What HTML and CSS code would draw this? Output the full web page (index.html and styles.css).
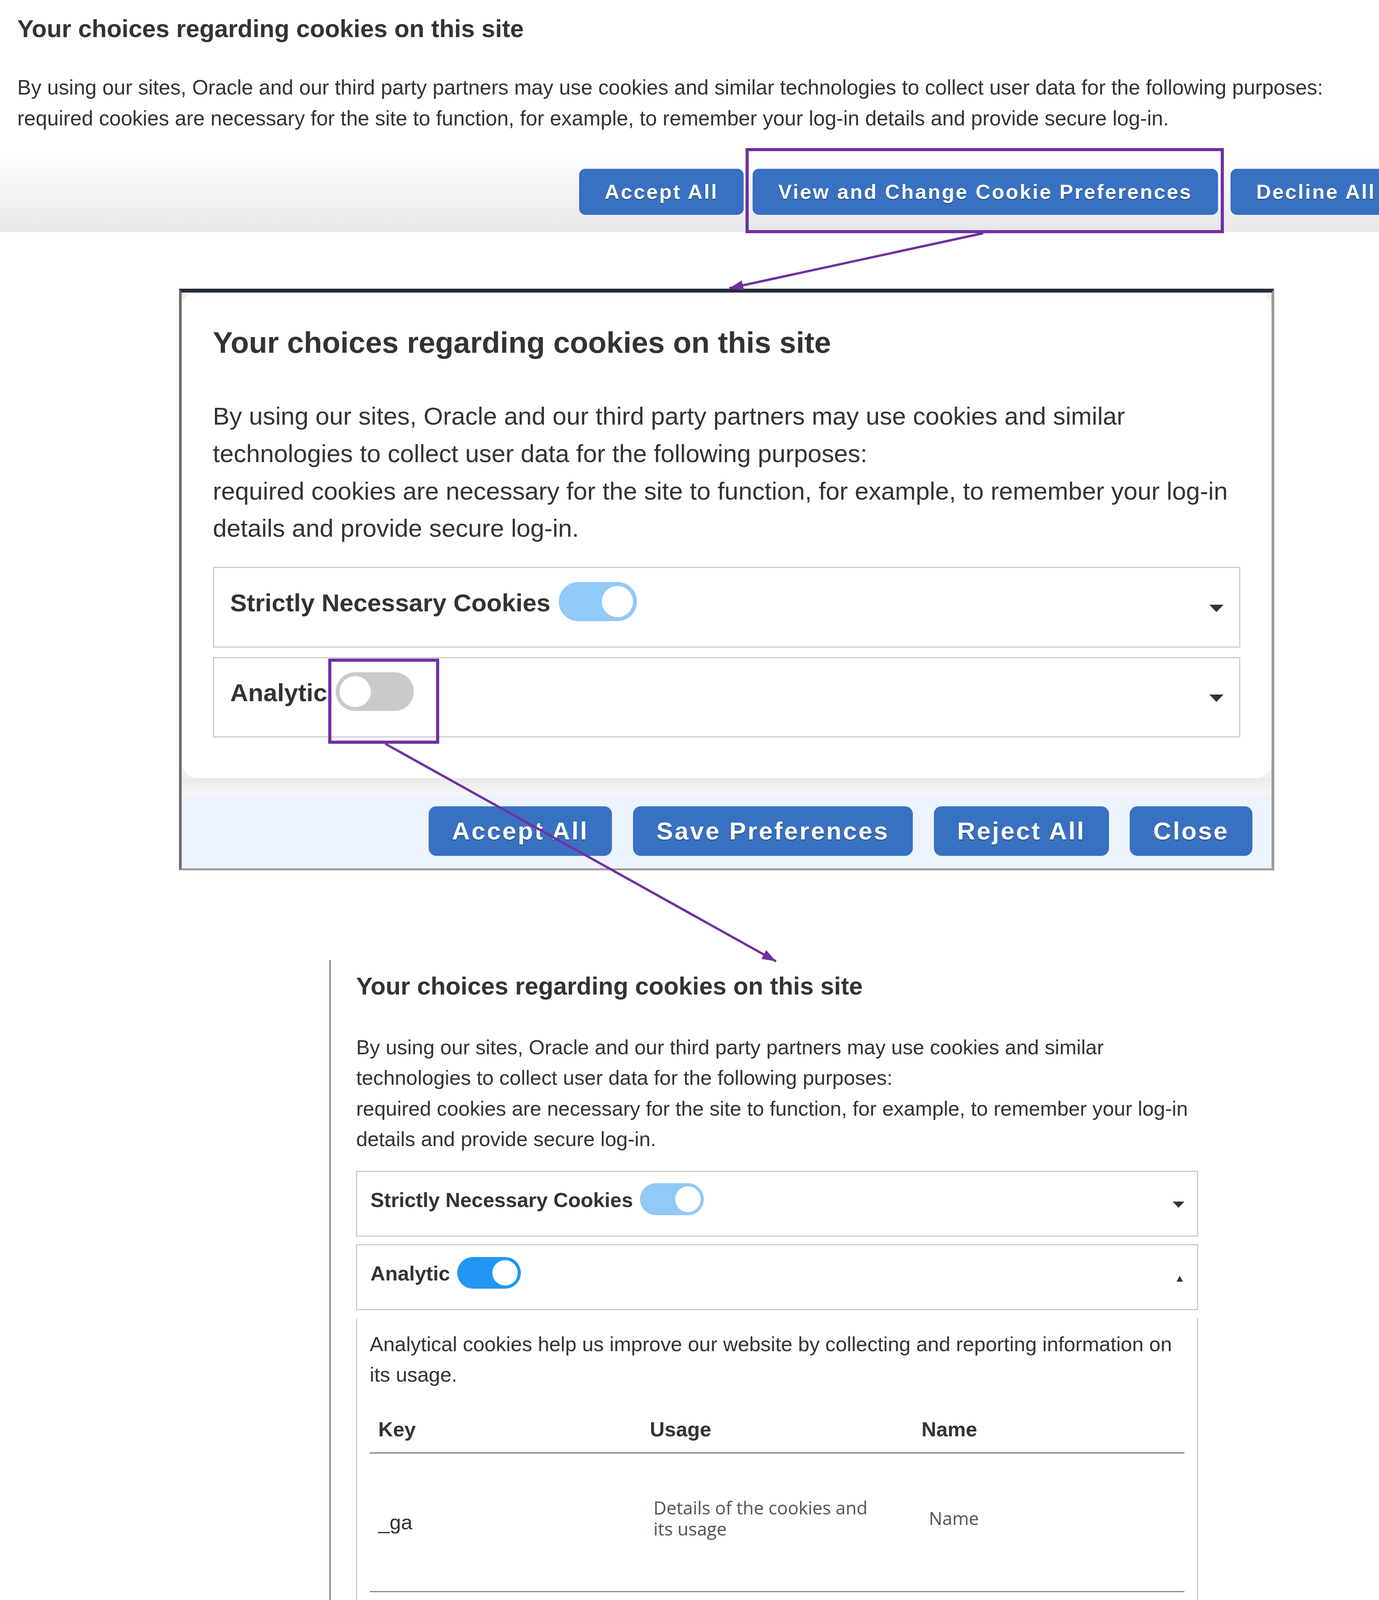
FILE: index.html
```html
<!DOCTYPE html>
<html lang="en">
<head>
<meta charset="utf-8">
<title>Cookie preferences</title>
<link rel="stylesheet" href="styles.css">
</head>
<body>
<div class="page">
  <section class="banner">
    <h2 class="title">Your choices regarding cookies on this site</h2>
    <p class="text banner-text">By using our sites, Oracle and our third party partners may use cookies and similar technologies to collect user data for the following purposes:<br>required cookies are necessary for the site to function, for example, to remember your log-in details and provide secure log-in.</p>
    <div class="banner-actions">
      <button class="btn btn-lg">Accept All</button>
      <button class="btn btn-lg">View and Change Cookie Preferences</button>
      <button class="btn btn-lg btn-decline">Decline All</button>
    </div>
  </section>

  <section class="modal modal-lg">
    <div class="card">
      <h2 class="title card-title">Your choices regarding cookies on this site</h2>
      <p class="text card-text">By using our sites, Oracle and our third party partners may use cookies and similar technologies to collect user data for the following purposes:<br>required cookies are necessary for the site to function, for example, to remember your log-in details and provide secure log-in.</p>
      <div class="acc">
        <span class="acc-label">Strictly Necessary Cookies</span>
        <span class="toggle toggle-locked"><span class="knob"></span></span>
        <span class="caret"></span>
      </div>
      <div class="acc">
        <span class="acc-label">Analytic</span>
        <span class="toggle"><span class="knob"></span></span>
        <span class="caret"></span>
      </div>
    </div>
    <div class="shade"></div>
    <div class="footer">
      <button class="btn btn-sm">Accept All</button>
      <button class="btn btn-sm">Save Preferences</button>
      <button class="btn btn-sm">Reject All</button>
      <button class="btn btn-sm">Close</button>
    </div>
  </section>

  <section class="modal modal-sm">
    <div class="card card-cut">
      <h2 class="title card-title">Your choices regarding cookies on this site</h2>
      <p class="text card-text">By using our sites, Oracle and our third party partners may use cookies and similar technologies to collect user data for the following purposes:<br>required cookies are necessary for the site to function, for example, to remember your log-in details and provide secure log-in.</p>
      <div class="acc">
        <span class="acc-label">Strictly Necessary Cookies</span>
        <span class="toggle toggle-locked"><span class="knob"></span></span>
        <span class="caret"></span>
      </div>
      <div class="acc">
        <span class="acc-label">Analytic</span>
        <span class="toggle toggle-on"><span class="knob"></span></span>
        <span class="caret caret-up"></span>
      </div>
      <div class="panel">
        <p class="text">Analytical cookies help us improve our website by collecting and reporting information on its usage.</p>
        <div class="ctable">
          <div class="th">Key</div>
          <div class="th">Usage</div>
          <div class="th">Name</div>
          <div class="td r1">_ga</div>
          <div class="td r1 td-os pad-usage">Details of the cookies and<br>its usage</div>
          <div class="td r1 td-os pad-name">Name</div>
          <div class="td r2">_ga_*</div>
          <div class="td r2 td-os pad-usage">Details of the cookies and its<br>usage</div>
          <div class="td r2 td-os pad-name">Name</div>
        </div>
      </div>
    </div>
    <div class="shade"></div>
    <div class="footer">
      <button class="btn btn-sm">Accept All</button>
      <button class="btn btn-sm">Save Preferences</button>
      <button class="btn btn-sm">Reject All</button>
      <button class="btn btn-sm">Close</button>
    </div>
  </section>
</div>

<svg class="annot" width="3529" height="4936" viewBox="0 0 3529 4936" xmlns="http://www.w3.org/2000/svg">
  <defs>
    <marker id="ah" markerWidth="36" markerHeight="26" refX="36" refY="13" orient="auto" markerUnits="userSpaceOnUse">
      <path d="M0,0 L36,13 L0,26 Z" fill="#7030a0"/>
    </marker>
  </defs>
  <rect x="1912" y="383" width="1216" height="210" fill="none" stroke="#7030a0" stroke-width="8"/>
  <line x1="2516" y1="597" x2="1866" y2="738" stroke="#7030a0" stroke-width="6" marker-end="url(#ah)"/>
  <rect x="844" y="1690" width="276" height="210" fill="none" stroke="#7030a0" stroke-width="8"/>
  <line x1="986" y1="1904" x2="1986" y2="2461" stroke="#7030a0" stroke-width="6" marker-end="url(#ah)"/>
</svg>
</body>
</html>
```

FILE: styles.css
```css
* {
  box-sizing: border-box;
}

html,
body {
  margin: 0;
  padding: 0;
}

body {
  position: relative;
  width: 3529px;
  background: #ffffff;
  color: #333333;
  font-family: "Liberation Sans", Arial, Helvetica, sans-serif;
}

.page {
  display: flex;
  flex-direction: column;
  align-items: flex-start;
  width: 3529px;
  overflow: hidden;
}

/* ---------- top banner ---------- */
.banner {
  --u: 3.27px;
  width: 100%;
  padding: calc(var(--u) * 11.6) calc(var(--u) * 13.5) calc(var(--u) * 13.5);
  background: linear-gradient(to bottom, #ffffff 0%, #ffffff 66%, #e7e7e7 100%);
}

.title {
  margin: 0 0 calc(var(--u) * 23);
  font-size: calc(var(--u) * 19.2);
  line-height: calc(var(--u) * 22);
  font-weight: 700;
  color: #333333;
}

.text {
  margin: 0;
  font-size: calc(var(--u) * 16);
  line-height: calc(var(--u) * 24);
  color: #333333;
}

.banner-text {
  font-size: calc(var(--u) * 16.2);
}

.banner-actions {
  display: flex;
  justify-content: flex-end;
  gap: calc(var(--u) * 7);
  margin: calc(var(--u) * 27.5) -101px 0 0;
}

.btn {
  display: flex;
  align-items: center;
  border: 0;
  margin: 0;
  background: #3871c2;
  color: #ffffff;
  font-family: "Liberation Sans", Arial, Helvetica, sans-serif;
  font-weight: 700;
  font-size: calc(var(--u) * 16);
  letter-spacing: calc(var(--u) * 1);
  white-space: nowrap;
  border-radius: calc(var(--u) * 5);
  text-shadow: 0 calc(var(--u) * 0.6) calc(var(--u) * 0.5) #1c3c70;
  box-shadow: inset 0 calc(var(--u) * 0.4) 0 #4a82cf;
}

.btn-lg {
  height: calc(var(--u) * 36);
  padding: 0 calc(var(--u) * 20);
  letter-spacing: calc(var(--u) * 1.12);
}

.btn-decline {
  margin-left: calc(var(--u) * 3);
}

.btn-sm {
  height: calc(var(--u) * 32);
  padding: 0 calc(var(--u) * 15);
}

/* ---------- modals ---------- */
.modal {
  --u: 3.27px;
  display: flex;
  flex-direction: column;
  background: #f0f0f0;
}

.modal-lg {
  --u: 3.99px;
  width: calc(var(--u) * 699 + 14px);
  margin: 145px 0 0 458px;
  border-top: 10px solid #262e3b;
  border-left: 7px solid #707070;
  border-right: 7px solid #9b9b9b;
  border-bottom: 5px solid #9b9b9b;
}

.modal-sm {
  width: calc(var(--u) * 699 + 3px);
  margin: 230px 0 0 843px;
  border-left: 3px solid #767676;
  border-bottom: 14px solid #9a9a9a;
}

.card {
  background: #ffffff;
  border-radius: calc(var(--u) * 10);
  padding: calc(var(--u) * 21) calc(var(--u) * 20) calc(var(--u) * 20);
}

.card-cut {
  padding-top: calc(var(--u) * 9.6);
  border-top-left-radius: 0;
  border-top-right-radius: 0;
}

.card-title {
  margin-bottom: calc(var(--u) * 24.5);
}

.card-text {
  margin-bottom: calc(var(--u) * 12.6);
}

/* accordion rows */
.acc {
  display: flex;
  align-items: flex-start;
  height: calc(var(--u) * 51.7);
  margin-bottom: calc(var(--u) * 6);
  padding: calc(var(--u) * 9) calc(var(--u) * 10) 0 calc(var(--u) * 10.3);
  border: calc(var(--u) * 1) solid #cccccc;
}

.acc-label {
  padding-top: calc(var(--u) * 0.8);
  margin-right: calc(var(--u) * 5.5);
  font-weight: 700;
  font-size: calc(var(--u) * 16);
  line-height: calc(var(--u) * 25);
  color: #333333;
  white-space: nowrap;
}

.toggle {
  display: flex;
  justify-content: flex-start;
  width: calc(var(--u) * 50);
  height: calc(var(--u) * 25);
  padding: calc(var(--u) * 2.5);
  border-radius: calc(var(--u) * 12.5);
  background: #cacaca;
  flex-shrink: 0;
}

.toggle-locked {
  justify-content: flex-end;
  background: #91c9f8;
}

.toggle-on {
  justify-content: flex-end;
  background: #2196f3;
}

.knob {
  width: calc(var(--u) * 20);
  height: calc(var(--u) * 20);
  border-radius: 50%;
  background: #ffffff;
}

.caret {
  width: 0;
  height: 0;
  margin-left: auto;
  margin-top: calc(var(--u) * 14.5);
  border-left: calc(var(--u) * 4.75) solid transparent;
  border-right: calc(var(--u) * 4.75) solid transparent;
  border-top: calc(var(--u) * 5) solid #333333;
}

.caret-up {
  margin-top: calc(var(--u) * 14.8);
  margin-right: calc(var(--u) * 1.2);
  border-left-width: calc(var(--u) * 2.75);
  border-right-width: calc(var(--u) * 2.75);
  border-top: 0;
  border-bottom: calc(var(--u) * 4.6) solid #333333;
}

/* expanded panel */
.panel {
  border: calc(var(--u) * 1) solid #cccccc;
  border-top: 0;
  padding: calc(var(--u) * 8.5) calc(var(--u) * 9.8) calc(var(--u) * 22.2) calc(var(--u) * 9.7);
}

.ctable {
  display: grid;
  grid-template-columns: repeat(3, 1fr);
  margin-top: calc(var(--u) * 10);
}

.th {
  padding: calc(var(--u) * 8.6) 0 calc(var(--u) * 6.1) calc(var(--u) * 6.7);
  border-bottom: calc(var(--u) * 1) solid #7c7c7c;
  font-weight: 700;
  font-size: calc(var(--u) * 16);
  line-height: calc(var(--u) * 24);
  color: #333333;
}

.td {
  display: flex;
  align-items: center;
  padding-left: calc(var(--u) * 6.7);
  border-bottom: calc(var(--u) * 1) solid #8c8c8c;
  font-size: calc(var(--u) * 16);
  line-height: calc(var(--u) * 24);
  color: #333333;
}

.r1 {
  height: calc(var(--u) * 108.6);
}

.r2 {
  height: calc(var(--u) * 156.9);
}

.td-os {
  padding-bottom: calc(var(--u) * 6);
  font-family: "Open Sans", "Liberation Sans", sans-serif;
  font-size: calc(var(--u) * 14);
  line-height: calc(var(--u) * 16.5);
  color: #555555;
}

.pad-usage {
  padding-left: calc(var(--u) * 9.5);
}

.pad-name {
  padding-left: calc(var(--u) * 12.5);
}

/* footer */
.shade {
  height: calc(var(--u) * 10);
  background: linear-gradient(to bottom, #e9e9e9, #f7f7f7);
}

.footer {
  display: flex;
  justify-content: flex-end;
  align-items: center;
  gap: calc(var(--u) * 13.5);
  height: calc(var(--u) * 48);
  padding-right: calc(var(--u) * 12.3);
  background: #edf4fd;
}

/* annotation overlay */
.annot {
  position: absolute;
  top: 0;
  left: 0;
  pointer-events: none;
}
```
